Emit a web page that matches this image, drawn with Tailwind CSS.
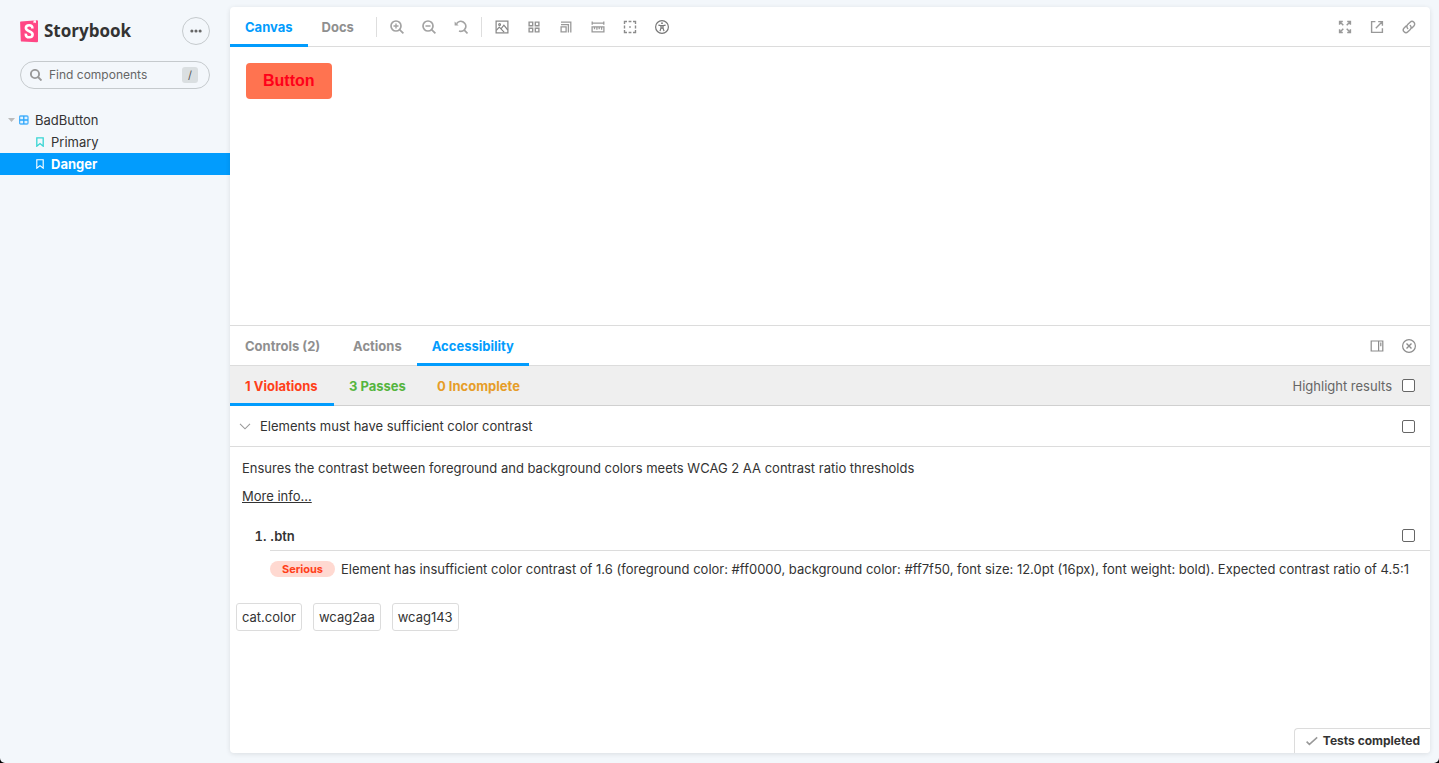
<!DOCTYPE html>
<html lang="en" class="bg-black">
<head>
<meta charset="utf-8">
<meta name="viewport" content="width=device-width, initial-scale=1">
<title>BadButton - Danger · Storybook</title>
<script src="https://cdn.jsdelivr.net/npm/@tailwindcss/browser@4"></script>
</head>
<body class="flex h-screen overflow-hidden rounded-b-[5px] bg-[#f3f7fb] font-['Inter','Liberation_Sans',sans-serif] text-[13px] leading-5 text-[#333]">

<aside class="w-[230px] shrink-0">
  <header class="flex items-center justify-between px-5 pt-[17px]">
    <a href="#" class="flex items-center gap-[5px] text-[#333]">
      <svg class="h-[23px] w-[19px]" viewBox="0 0 19 23" aria-hidden="true">
        <path d="M0.1 2.3 Q0 1.5 0.9 1.4 L17 0.3 Q18 0.3 18 1.3 V21.2 Q18 22.2 17 22.2 L1.7 21.6 Q0.8 21.5 0.8 20.7 Z" fill="#ff4785"/>
        <path d="M13.6 0.4 L15.9 0.2 V3.3 L14.8 2.5 L13.5 3.2 Z" fill="#fff"/>
        <path d="M12.4 8.5 C12.5 6.2 11.2 5.3 9.2 5.3 C7.2 5.3 5.9 6.4 5.9 8.1 C5.9 11.9 12.6 10.7 12.6 14.5 C12.6 16.4 11.3 17.3 9.3 17.3 C7 17.3 5.6 16.2 5.8 13.7" fill="none" stroke="#fff" stroke-width="2.6"/>
      </svg>
      <span class="font-['Open_Sans','Noto_Sans',sans-serif] text-[17px] font-bold leading-6">Storybook</span>
    </a>
    <button type="button" aria-label="Shortcuts" class="flex size-7 items-center justify-center rounded-full border border-[#c5cacd]">
      <svg class="size-3" viewBox="0 0 14 14" fill="#666"><circle cx="2.2" cy="7" r="1.8"/><circle cx="7" cy="7" r="1.8"/><circle cx="11.8" cy="7" r="1.8"/></svg>
    </button>
  </header>

  <label class="mx-5 mt-4 flex h-7 items-center rounded-full border border-[#c5cacd] pl-[9px] pr-[11px]">
    <svg class="size-3 shrink-0" viewBox="0 0 12 12" fill="none" stroke="#999" stroke-width="1.9"><circle cx="5" cy="5" r="4.1"/><path d="M8 8l3.5 3.5"/></svg>
    <input type="text" aria-label="Find components" placeholder="Find components" class="ml-[7px] w-0 grow bg-transparent text-xs text-[#333] outline-none placeholder:text-[#666]">
    <kbd class="flex h-4 w-4 items-center justify-center rounded-[3px] bg-[#dadfe1] font-['Inter','Liberation_Sans',sans-serif] text-[11px] text-[#555]">/</kbd>
  </label>

  <nav class="mt-5 flex flex-col">
    <a href="#" class="flex h-[22px] items-center pl-2">
      <svg class="mr-1 h-1 w-[7px]" viewBox="0 0 7 4" fill="#bbb"><path d="M0 0h7L3.5 4z"/></svg>
      <svg class="mr-[6px] size-[10px]" viewBox="0 0 10 10"><rect x=".6" y="1" width="8.4" height="8" rx="1" fill="#e3f3ff" stroke="#4cb2fb" stroke-width="1.3"/><path d="M4.8 1v8M.6 5H9" stroke="#2ba6fc" stroke-width="1.3"/></svg>
      BadButton
    </a>
    <a href="#" class="flex h-[22px] items-center gap-[7px] pl-9">
      <svg class="h-[10px] w-2" viewBox="0 0 8 10" fill="none" stroke="#37d5d3" stroke-width="1.3"><path d="M.8.8h6.4v8.4L4 6.6.8 9.2z"/></svg>
      Primary
    </a>
    <a href="#" aria-current="page" class="flex h-[22px] items-center gap-[7px] bg-[#029cfd] pl-9 font-bold text-white">
      <svg class="h-[10px] w-2" viewBox="0 0 8 10" fill="none" stroke="#fff" stroke-width="1.1"><path d="M.8.8h6.4v8.4L4 6.6.8 9.2z"/></svg>
      Danger
    </a>
  </nav>
</aside>

<main class="mt-[7px] mr-[9px] mb-[10px] flex min-w-0 grow flex-col overflow-hidden rounded bg-white shadow-[0_1px_5px_rgba(0,0,0,0.1)]">
  <div class="flex h-10 shrink-0 border-b border-[#dcdcdc]">
    <button type="button" class="-mb-px h-10 border-b-3 border-[#029cfd] px-[15px] pt-[3px] font-bold text-[#029cfd]">Canvas</button>
    <button type="button" class="-mb-px h-10 border-b-3 border-transparent pr-[15px] pl-[14px] pt-[3px] font-bold text-[#8f8f8f]">Docs</button>
    <div class="flex grow items-center gap-1 text-[#999]">
      <span class="ml-[7px] mr-[2px] h-5 w-px bg-[#dedede]"></span>
      <button type="button" aria-label="Zoom in" class="flex size-7 items-center justify-center"><svg class="size-[14px]" viewBox="0 0 14 14" fill="none" stroke="#a3a3a3" stroke-width="1.7"><circle cx="6" cy="6" r="5"/><path d="M9.6 9.6l3.8 3.8"/><path d="M6 3.5v5M3.5 6h5" stroke-width="1.4"/></svg></button>
      <button type="button" aria-label="Zoom out" class="flex size-7 items-center justify-center"><svg class="size-[14px]" viewBox="0 0 14 14" fill="none" stroke="#a3a3a3" stroke-width="1.7"><circle cx="6" cy="6" r="5"/><path d="M9.6 9.6l3.8 3.8"/><path d="M3.5 6h5" stroke-width="1.4"/></svg></button>
      <button type="button" aria-label="Reset zoom" class="flex size-7 items-center justify-center"><svg class="size-[14px]" viewBox="0 0 14 14" fill="none" stroke="#a3a3a3" stroke-width="1.7"><path d="M2.6 3.6A5 5 0 1 1 5 11M9.8 9.6l3.7 3.8"/><path d="M.6 1.6v4h4z" fill="#a3a3a3" stroke="none"/></svg></button>
      <span class="mx-[2px] h-5 w-px bg-[#dedede]"></span>
      <button type="button" aria-label="Change background" class="flex size-7 items-center justify-center"><svg class="size-[14px]" viewBox="0 0 14 14" fill="none" stroke="#858585" stroke-width="1.2"><rect x="1.1" y="1.1" width="11.8" height="11.8"/><circle cx="4.6" cy="4.4" r=".9"/><path d="M1.3 10.4l3-3.2 1.7 1.7 2.9-3.7 3.9 4.8M4.3 7.2l4.8 4.9"/></svg></button>
      <button type="button" aria-label="Apply a grid" class="flex size-7 items-center justify-center"><svg class="size-[14px]" viewBox="0 0 14 14" fill="none" stroke="#949494" stroke-width="1.4"><path d="M2.1 2.1h3.6v3.6H2.1zM8.3 2.1h3.6v3.6H8.3zM2.1 8.3h3.6v3.6H2.1zM8.3 8.3h3.6v3.6H8.3z"/></svg></button>
      <button type="button" aria-label="Change viewport size" class="flex size-7 items-center justify-center"><svg class="size-[14px]" viewBox="0 0 14 14" fill="none" stroke="currentColor" stroke-width="1.3"><path d="M2.1 6.9h5v5h-5zM2 4.6h7.4V12.4M2 2.2h9.8V12.4"/></svg></button>
      <button type="button" aria-label="Enable measure" class="flex size-7 items-center justify-center"><svg class="size-[14px]" viewBox="0 0 14 14" fill="none" stroke="currentColor" stroke-width="1.3"><path d="M1 3.2h12M1.2 1.6v3.2M12.8 1.6v3.2M1.1 6.9h11.8v5H1.1zM3.5 7v2.2M5.9 7v2.8M8.2 7v2.2M10.6 7v2.8"/></svg></button>
      <button type="button" aria-label="Apply outlines" class="flex size-7 items-center justify-center"><svg class="size-[14px]" viewBox="0 0 14 14" fill="none" stroke="#8c8c8c" stroke-width="1.4"><path d="M1.5 4V1.5H4M5.6 1.5h2.8M10 1.5h2.5V4M12.5 5.6v2.8M12.5 10v2.5H10M8.4 12.5H5.6M4 12.5H1.5V10M1.5 8.4V5.6"/><path d="M6.2 7h1.6" stroke-width="1.6"/></svg></button>
      <button type="button" aria-label="Vision simulator" class="flex size-7 items-center justify-center"><svg class="size-[14px]" viewBox="0 0 14 14" fill="none" stroke="#777" stroke-width="1.2"><circle cx="7" cy="7" r="6.4"/><circle cx="7" cy="3.2" r=".9" fill="#777" stroke="none"/><path d="M3.4 5.1l2.3.6h2.6l2.3-.6M6 5.7v2.2l-1 3.3M8 5.7v2.2l1 3.3M6 8.1h2"/></svg></button>
      <div class="ml-auto flex gap-1 pr-[7px]">
        <button type="button" aria-label="Go full screen" class="flex size-7 items-center justify-center"><svg class="size-[14px]" viewBox="0 0 14 14" fill="none" stroke="currentColor" stroke-width="1.5"><path d="M1.6 4.8V1.6h3.2M9.2 1.6h3.2v3.2M12.4 9.2v3.2H9.2M4.8 12.4H1.6V9.2M1.8 1.8l3.5 3.5M12.2 1.8L8.7 5.3M12.2 12.2L8.7 8.7M1.8 12.2l3.5-3.5"/></svg></button>
        <button type="button" aria-label="Open canvas in new tab" class="flex size-7 items-center justify-center"><svg class="size-[14px]" viewBox="0 0 14 14" fill="none" stroke="currentColor" stroke-width="1.4"><path d="M5.4 1.6H1.6v10.8h10.8V8.2M8.2 1.6h4.2v4.2M12.2 1.8L5.8 8.2"/></svg></button>
        <button type="button" aria-label="Copy canvas link" class="flex size-7 items-center justify-center"><svg class="size-[14px]" viewBox="0 0 14 14" fill="none" stroke="currentColor" stroke-width="1.4" stroke-linecap="round"><path d="M5.7 8.6a2.8 2.8 0 0 1 0-4l2.4-2.4a2.6 2.6 0 0 1 3.8 3.8L9.9 8M8.3 5.4a2.8 2.8 0 0 1 0 4l-2.4 2.4A2.6 2.6 0 0 1 2.1 8l2-2"/></svg></button>
      </div>
    </div>
  </div>

  <section class="h-[278px] shrink-0 p-4">
    <button type="button" class="h-9 rounded bg-[#ff7350] px-[17px] font-['Liberation_Sans',sans-serif] text-base font-bold text-[#ff0019]">Button</button>
  </section>

  <section class="relative flex min-h-0 grow flex-col border-t border-[#dcdcdc]">
    <div class="flex h-10 shrink-0 border-b border-[#dcdcdc]">
      <button type="button" class="-mb-px h-10 min-w-[108px] border-b-3 border-transparent px-[15px] pt-[3px] text-left font-bold text-[#8f8f8f]">Controls (2)</button>
      <button type="button" class="-mb-px h-10 border-b-3 border-transparent px-[15px] pt-[3px] font-bold text-[#8f8f8f]">Actions</button>
      <button type="button" class="-mb-px h-10 border-b-3 border-[#029cfd] px-[15px] pt-[3px] font-bold text-[#029cfd]">Accessibility</button>
      <div class="ml-auto flex items-center gap-1 pr-[7px]">
        <button type="button" aria-label="Change addon orientation" class="flex size-7 items-center justify-center"><svg class="size-[14px]" viewBox="0 0 14 14" fill="none" stroke="#8c8c8c" stroke-width="1.2"><path d="M1.2 2h11.6v10H1.2zM8.6 2v10M10.8 3.6v3.6"/></svg></button>
        <button type="button" aria-label="Hide addons" class="flex size-7 items-center justify-center"><svg class="size-[14px]" viewBox="0 0 14 14" fill="none" stroke="#8c8c8c" stroke-width="1.2"><circle cx="7" cy="7" r="6.4"/><path d="M4.5 4.5l5 5M9.5 4.5l-5 5" stroke-width="1.4"/></svg></button>
      </div>
    </div>

    <div class="flex h-10 shrink-0 border-b border-[#d0d0d0] bg-[#efefef]">
      <button type="button" class="-mb-px h-10 min-w-[104px] border-b-3 border-[#029cfd] px-[15px] pt-[3px] text-left font-bold text-[#ff4019]">1 Violations</button>
      <button type="button" class="-mb-px h-10 min-w-[88px] border-b-3 border-transparent px-[15px] pt-[3px] text-left font-bold text-[#55b53f]">3 Passes</button>
      <button type="button" class="-mb-px h-10 border-b-3 border-transparent px-[15px] pt-[3px] font-bold text-[#e69d28]">0 Incomplete</button>
      <label class="ml-auto flex items-center gap-[10px] pr-[15px] text-[#666]">Highlight results
        <input type="checkbox" class="size-[13px] appearance-none rounded-[2px] border border-[#666] bg-white">
      </label>
    </div>

    <div class="flex h-[41px] shrink-0 items-center border-b border-[#dcdcdc] pl-[9px] pr-[15px]">
      <button type="button" aria-expanded="true" class="flex grow items-center gap-[9px] text-left">
        <svg class="h-[7px] w-3" viewBox="0 0 12 7" fill="none" stroke="#999" stroke-width="1.1"><path d="M1 .8l5 5 5-5"/></svg>
        Elements must have sufficient color contrast
      </button>
      <input type="checkbox" aria-label="Highlight rule results" class="size-[13px] appearance-none rounded-[2px] border border-[#666]">
    </div>

    <div class="px-3 pt-[11px]">
      <p>Ensures the contrast between foreground and background colors meets WCAG 2 AA contrast ratio thresholds</p>
      <a href="#" class="mt-2 inline-block underline">More info...</a>
    </div>

    <ol class="mt-[18px] list-decimal pl-10">
      <li class="font-semibold">
        <div class="flex h-[27px] items-center border-b border-[#dcdcdc] pr-[15px] pb-[3px]">
          <span class="grow">.btn</span>
          <input type="checkbox" aria-label="Highlight .btn" class="size-[13px] appearance-none rounded-[2px] border border-[#666]">
        </div>
        <div class="mt-2 flex items-center gap-[6px] font-normal">
          <span class="flex h-4 w-[65px] shrink-0 items-center justify-center rounded-full bg-[#ffd9d1] text-[11px] font-bold text-[#ff4019]">Serious</span>
          <span class="whitespace-nowrap">Element has insufficient color contrast of 1.6 (foreground color: #ff0000, background color: #ff7f50, font size: 12.0pt (16px), font weight: bold). Expected contrast ratio of 4.5:1</span>
        </div>
      </li>
    </ol>

    <div class="mt-6 flex gap-[11px] px-[6px]">
      <span class="rounded-[3px] border border-[#dcdcdc] px-[5px] py-[3px]">cat.color</span>
      <span class="rounded-[3px] border border-[#dcdcdc] px-[5px] py-[3px]">wcag2aa</span>
      <span class="rounded-[3px] border border-[#dcdcdc] px-[5px] py-[3px]">wcag143</span>
    </div>

    <div class="absolute right-0 bottom-0 flex h-[25px] items-center gap-[5px] rounded-tl border-t border-l border-[#dcdcdc] bg-white pr-[10px] pl-[11px] text-xs font-bold">
      <svg class="size-3" viewBox="0 0 12 12" fill="none" stroke="#999" stroke-width="1.5"><path d="M.6 6.6l2.8 2.8L11.2 2.4"/></svg>
      Tests completed
    </div>
  </section>
</main>
</body>
</html>
